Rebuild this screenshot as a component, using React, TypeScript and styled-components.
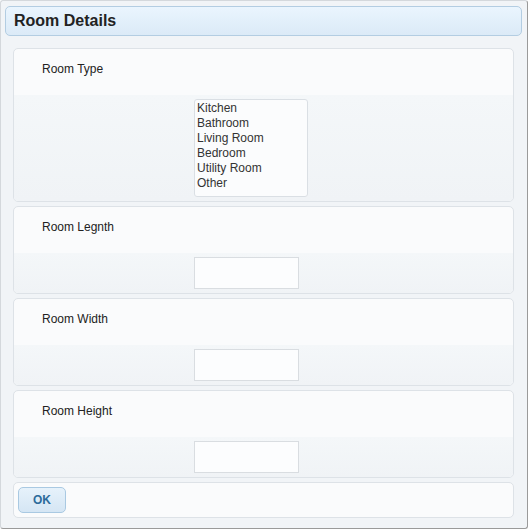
import styled, { createGlobalStyle } from 'styled-components';

const GlobalStyle = createGlobalStyle`
  html, body {
    margin: 0;
    padding: 0;
    background: #ffffff;
  }
  * {
    box-sizing: border-box;
  }
`;

const Dialog = styled.div`
  width: 528px;
  height: 529px;
  display: flex;
  flex-direction: column;
  background: #f1f4f7;
  border: 1px solid #d4d8dc;
  border-right-color: #9a9a9a;
  border-bottom-color: #9a9a9a;
  border-radius: 3px;
  padding: 5px 5px 0 4px;
  font-family: 'Liberation Sans', Arial, sans-serif;
  color: #222;
`;

const Header = styled.div`
  height: 30px;
  display: flex;
  align-items: center;
  padding-left: 8px;
  border: 1px solid #b3cde2;
  border-radius: 5px;
  background: linear-gradient(#eaf5fe, #dbeaf7);
  font-size: 16px;
  font-weight: bold;
  color: #222;
`;

const Body = styled.div`
  display: flex;
  flex-direction: column;
  gap: 4px;
  padding: 12px 8px 0 8px;
`;

const Panel = styled.div`
  display: flex;
  flex-direction: column;
  border: 1px solid #dde2e7;
  border-radius: 5px;
  background: #fafbfc;
  overflow: hidden;
`;

const LabelRow = styled.div`
  height: 46px;
  padding: 13px 0 0 28px;
  font-size: 12px;
  line-height: 15px;
  color: #222;
`;

const FieldRow = styled.div`
  padding: 4px 0 4px 180px;
  background: linear-gradient(#f4f7f9, #f0f3f6);
`;

const ListBox = styled.ul`
  list-style: none;
  margin: 0;
  width: 114px;
  height: 98px;
  padding: 1px 2px;
  border: 1px solid #dadfe4;
  border-radius: 3px;
  background: #fbfcfd;
  font-size: 12px;
  line-height: 15px;
  color: #333;
`;

const TextInput = styled.input`
  display: block;
  width: 105px;
  height: 32px;
  margin: 0;
  border: 1px solid #d9dde1;
  border-radius: 0;
  background: #fcfdfe;
  outline: none;
`;

const ButtonBar = styled.div`
  height: 36px;
  display: flex;
  align-items: center;
  padding-left: 4px;
  border: 1px solid #dde2e7;
  border-radius: 5px;
  background: #fafbfc;
`;

const Button = styled.button`
  width: 48px;
  height: 26px;
  border: 1px solid #a9c9e2;
  border-radius: 5px;
  background: linear-gradient(#e6f2fb, #d5e6f4);
  font-family: 'Liberation Sans', Arial, sans-serif;
  font-size: 12px;
  font-weight: bold;
  color: #2d6b9b;
  padding: 0;
`;

const roomTypes = ['Kitchen', 'Bathroom', 'Living Room', 'Bedroom', 'Utility Room', 'Other'];

function InputPanel({ label }: { label: string }) {
  return (
    <Panel>
      <LabelRow>{label}</LabelRow>
      <FieldRow>
        <TextInput type="text" />
      </FieldRow>
    </Panel>
  );
}

export default function App() {
  return (
    <>
      <GlobalStyle />
      <Dialog>
        <Header>Room Details</Header>
        <Body>
          <Panel>
            <LabelRow>Room Type</LabelRow>
            <FieldRow>
              <ListBox role="listbox">
                {roomTypes.map((t) => (
                  <li key={t}>{t}</li>
                ))}
              </ListBox>
            </FieldRow>
          </Panel>
          <InputPanel label="Room Legnth" />
          <InputPanel label="Room Width" />
          <InputPanel label="Room Height" />
          <ButtonBar>
            <Button>OK</Button>
          </ButtonBar>
        </Body>
      </Dialog>
    </>
  );
}
